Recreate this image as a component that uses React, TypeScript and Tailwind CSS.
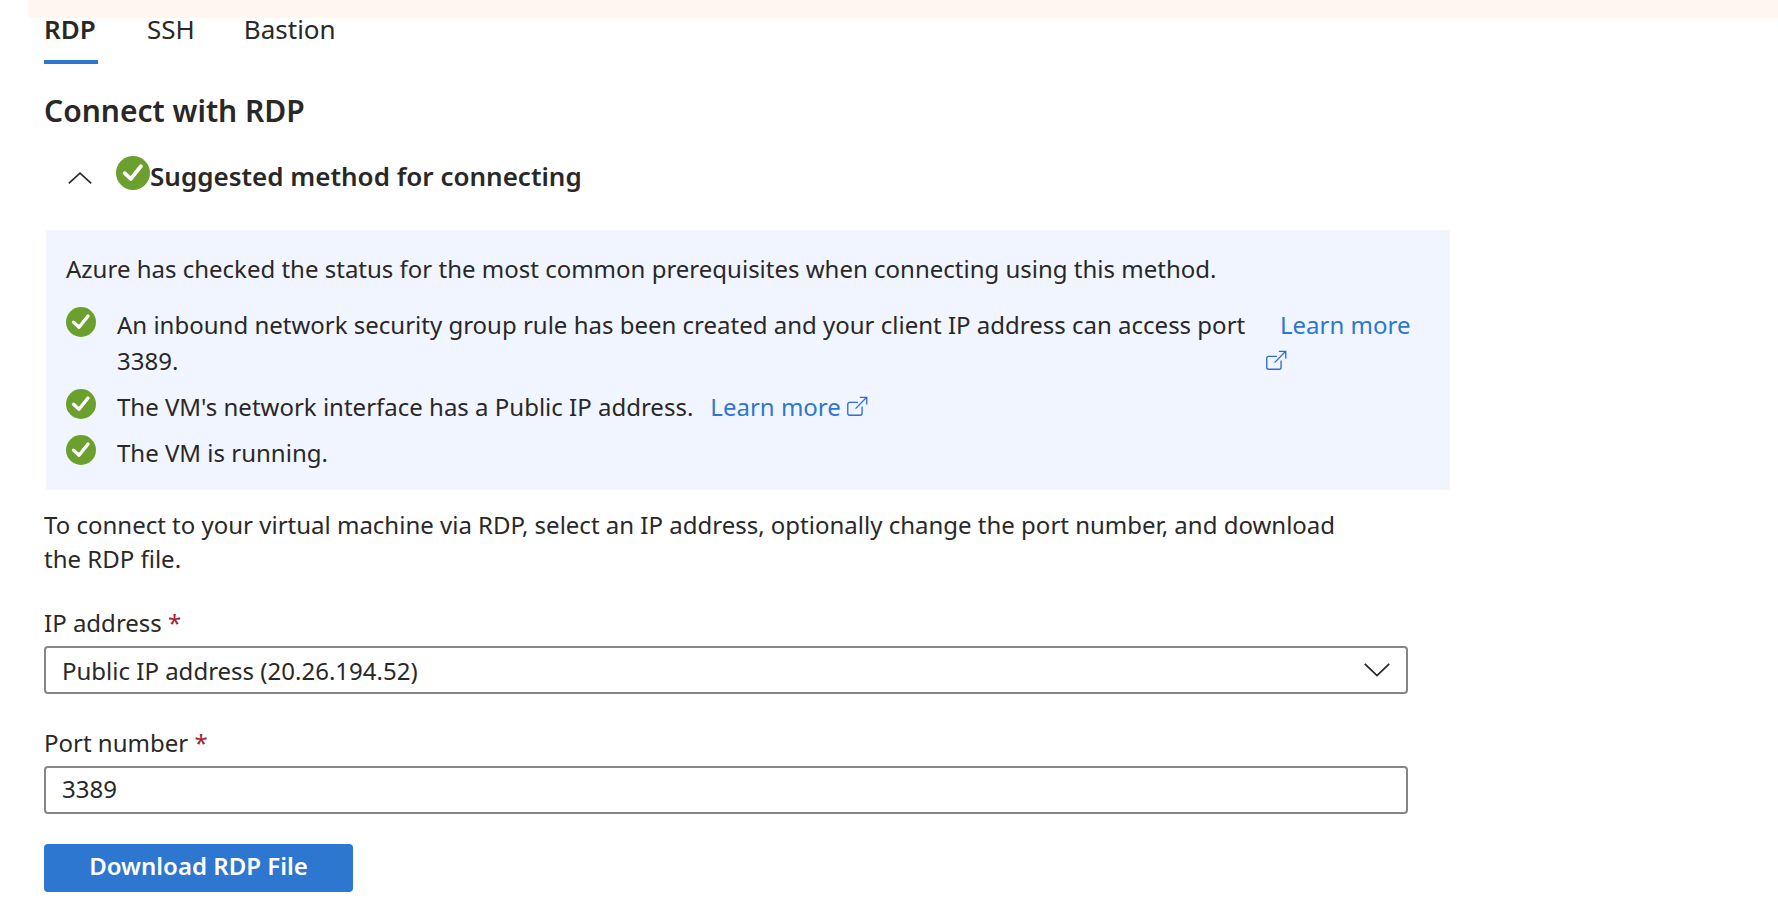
import { useState, type ReactNode } from "react";

const TABS = ["RDP", "SSH", "Bastion"];

function CheckBadge({ className }: { className: string }) {
  return (
    <svg viewBox="0 0 34 34" className={className} aria-hidden="true">
      <circle cx="17" cy="17" r="17" fill="#6ba02e" />
      <path
        d="M8.6 17.2 14.8 22.9 24.9 10.2"
        fill="none"
        stroke="#fff"
        strokeWidth="3.8"
        strokeLinecap="round"
        strokeLinejoin="round"
      />
    </svg>
  );
}

function ExternalIcon() {
  return (
    <svg
      viewBox="0 0 22 22"
      className="inline-block size-[21px] align-[-1px]"
      fill="none"
      stroke="#2f6bdc"
      strokeWidth="1.4"
      aria-hidden="true"
    >
      <path d="M11.5 6.6H2.8a2 2 0 0 0-2 2v9.6a2 2 0 0 0 2 2h11a2 2 0 0 0 2-2V11" />
      <path d="M9 13.2 20.6 1.4M13.4 1.4h7.3v7.4" />
    </svg>
  );
}

function LearnMore() {
  return (
    <a href="#learn-more" className="text-[#2e77d0]">
      Learn more <ExternalIcon />
    </a>
  );
}

function CheckItem({ children }: { children: ReactNode }) {
  return (
    <li className="flex items-start gap-[21px]">
      <CheckBadge className="size-[30px] shrink-0" />
      {children}
    </li>
  );
}

function FieldLabel({ htmlFor, children }: { htmlFor: string; children: ReactNode }) {
  return (
    <label htmlFor={htmlFor} className="mb-[7px] block leading-8">
      {children} <span className="text-[#a4262c]">*</span>
    </label>
  );
}

export default function App() {
  const [tab, setTab] = useState("RDP");
  const [open, setOpen] = useState(true);
  const [port, setPort] = useState("3389");

  return (
    <div className="min-h-screen bg-white font-['Noto_Sans','Open_Sans',sans-serif] text-[24px] leading-9 text-[#292827]">
      <div className="ml-7 h-[18px] rounded-bl bg-[#fff6f0]" />
      <main className="max-w-[1450px] pb-6 pl-11">
        <div role="tablist" className="flex gap-[49px] text-[26px] leading-[22px]">
          {TABS.map((name) => (
            <button
              key={name}
              role="tab"
              aria-selected={tab === name}
              onClick={() => setTab(name)}
              className={
                tab === name
                  ? "min-w-[54px] border-b-4 border-[#2e77d0] pb-5 text-left font-semibold"
                  : "border-b-4 border-transparent pb-5 text-left"
              }
            >
              {name}
            </button>
          ))}
        </div>

        <h1 className="mt-[27px] text-[30px] leading-10 font-semibold">Connect with RDP</h1>

        <button
          aria-expanded={open}
          onClick={() => setOpen(!open)}
          className="mt-[25px] flex h-[38px] items-start pl-6"
        >
          <svg viewBox="0 0 24 12" className="mt-4 h-3 w-6" fill="none" stroke="#292827" strokeWidth="1.6" aria-hidden="true">
            <path d="M.8 11.4 12 1.2l11.2 10.2" />
          </svg>
          <CheckBadge className="ml-6 size-[34px]" />
          <span className="self-end text-[26px] leading-9 font-semibold">Suggested method for connecting</span>
        </button>

        {open && (
          <section className="mt-9 ml-0.5 bg-[#f0f5ff] px-5 pt-[21px] pb-[19px]">
            <p>Azure has checked the status for the most common prerequisites when connecting using this method.</p>
            <ul className="mt-5 flex flex-col gap-2.5">
              <CheckItem>
                <span className="flex-1">
                  An inbound network security group rule has been created and your client IP address can access port 3389.
                </span>
                <span className="-ml-[21px] w-[164px] shrink-0 indent-3.5">
                  <LearnMore />
                </span>
              </CheckItem>
              <CheckItem>
                <span>The VM's network interface has a Public IP address.</span>
                <span className="-ml-1">
                  <LearnMore />
                </span>
              </CheckItem>
              <CheckItem>
                <span>The VM is running.</span>
              </CheckItem>
            </ul>
          </section>
        )}

        <p className="mt-[18px] max-w-[1328px] leading-[34px]">
          To connect to your virtual machine via RDP, select an IP address, optionally change the port number, and
          download the RDP file.
        </p>

        <form className="max-w-[1364px]" onSubmit={(e) => e.preventDefault()}>
          <div className="mt-[31px]">
            <FieldLabel htmlFor="ip-address">IP address</FieldLabel>
            <div className="grid items-center">
              <select
                id="ip-address"
                className="col-start-1 row-start-1 h-12 w-full appearance-none rounded border-2 border-[#868685] bg-white px-4 pt-0.5"
              >
                <option>Public IP address (20.26.194.52)</option>
              </select>
              <svg
                viewBox="0 0 26 14"
                className="pointer-events-none col-start-1 row-start-1 mr-[18px] h-3.5 w-[26px] justify-self-end"
                fill="none"
                stroke="#292827"
                strokeWidth="1.8"
                aria-hidden="true"
              >
                <path d="M.8.8 13 12.6 25.2.8" />
              </svg>
            </div>
          </div>

          <div className="mt-[33px]">
            <FieldLabel htmlFor="port-number">Port number</FieldLabel>
            <input
              id="port-number"
              type="text"
              value={port}
              onChange={(e) => setPort(e.target.value)}
              className="block h-12 w-full rounded border-2 border-[#868685] bg-white px-4 pb-1"
            />
          </div>

          <button
            type="submit"
            className="mt-[30px] h-12 w-[309px] rounded bg-[#2e77d0] pb-1 font-semibold text-white"
          >
            Download RDP File
          </button>
        </form>
      </main>
    </div>
  );
}
